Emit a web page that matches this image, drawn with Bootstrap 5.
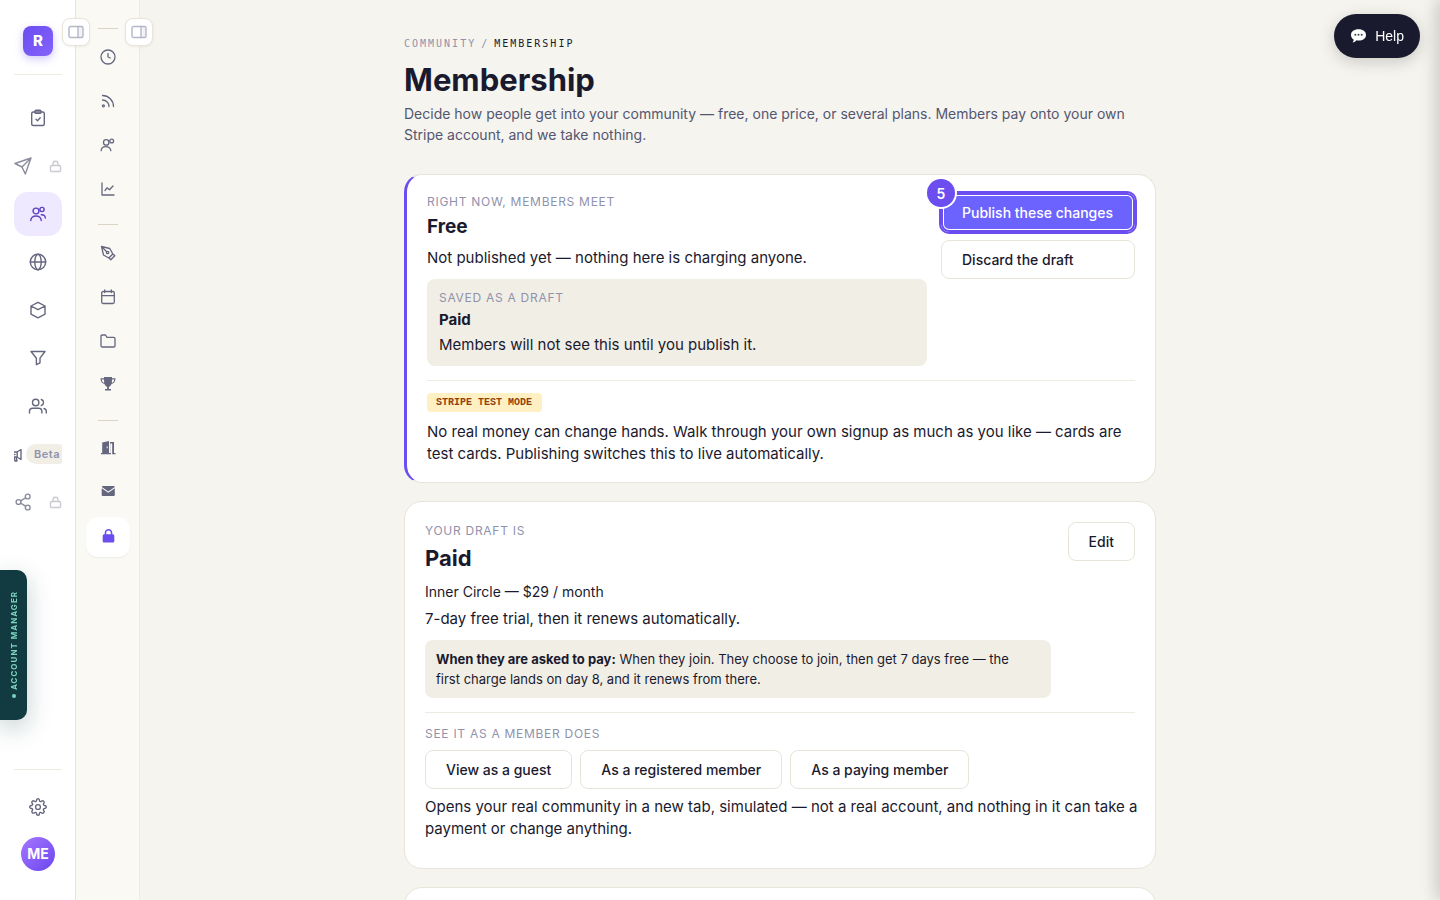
<!DOCTYPE html>
<html lang="en">
<head>
<meta charset="utf-8">
<meta name="viewport" content="width=device-width, initial-scale=1">
<title>Membership</title>
<link rel="stylesheet" href="https://cdn.jsdelivr.net/npm/bootstrap@5.3.0/dist/css/bootstrap.min.css">
<style>
  :root { --ink:#1a1a2e; --muted:#9092ac; --icon:#65677f; --line:#e8e4d9; --brand:#6b4df0; --sand:#f1eee6; }
  body { font-family:Inter,"Liberation Sans",sans-serif; font-size:15px; line-height:22px; color:var(--ink); background:#f5f4ef; }
  svg { fill:none; stroke:currentColor; stroke-width:1.4; stroke-linecap:round; stroke-linejoin:round; flex:none; display:block; }
  .solid { fill:currentColor; stroke:none; }

  /* navigation rails */
  .rail { width:76px; padding:26px 13px 29px 14px; background:#fff; border-right:1px solid var(--line); z-index:3; }
  .subrail { width:64px; padding:28px 9px 0 10px; background:#faf9f4; border-right:1px solid #eceae2; z-index:2; }
  .logo { width:30px; height:30px; border-radius:8px; background:linear-gradient(135deg,#6b4df0,#8463fb); color:#fff; font-weight:800; box-shadow:0 3px 8px #6b4df04d; }
  .rule { height:1px; background:#edeadf; }
  .rule-top { margin:18px 0 21px; }
  .rule-bottom { margin-bottom:15px; }
  .rail-link { height:44px; border-radius:14px; color:var(--icon); overflow:hidden; text-decoration:none; }
  .rail-link.active { background:#eee9ff; color:#5b3fc4; }
  .locked { opacity:.75; }
  .locked .padlock { opacity:.45; }
  .beta { height:20px; padding:0 8px; border-radius:10px; background:var(--sand); color:var(--muted); font-size:11px; font-weight:600; line-height:20px; letter-spacing:.5px; }
  .avatar { width:34px; height:34px; background:linear-gradient(135deg,#a577ff,#6b46ef); color:#fff; font-size:14px; font-weight:700; }
  .sub-link { height:40px; border-radius:12px; color:var(--icon); }
  .sub-link svg:not(.solid) { stroke-width:1.3; }
  .sub-link.active { background:#fff; color:var(--brand); box-shadow:0 1px 2px #0000000d; }
  .sub-rule { width:20px; height:1px; background:#dbd5c1; margin:11px auto 4px; }
  .sub-rule:first-of-type { margin-top:0; }
  .toggle { top:18px; width:28px; height:28px; border:1px solid var(--line); border-radius:8px; background:#fff; color:#b5b6c8; box-shadow:0 1px 3px #0000000f; }
  .rail .toggle { right:-15px; }
  .subrail .toggle { right:-14px; }

  .manager { left:0; bottom:180px; width:27px; height:150px; border-radius:0 10px 10px 0; background:#113b41; color:#7dd3bd; box-shadow:0 8px 24px #113b4140; z-index:5; }
  .manager .vertical { writing-mode:vertical-rl; transform:rotate(180deg); font-size:8px; line-height:12px; font-weight:700; letter-spacing:1px; gap:4px; }
  .dot { width:4px; height:4px; border-radius:50%; background:currentColor; }
  .help { top:14px; right:20px; height:44px; padding:0 16px; border-radius:22px; background:#1a1a2e; color:#fff; font:14px "Liberation Sans",sans-serif; box-shadow:0 4px 16px #0000002e; z-index:5; }
  .drawer { top:0; bottom:0; left:100%; width:320px; box-shadow:-4px 0 16px #0000002e; }

  /* page column */
  .page { overflow-y:auto; scrollbar-width:none; padding:36px 20px 0 0; }
  .column { max-width:752px; }
  .crumbs { font:10px/15px "DejaVu Sans Mono",monospace; letter-spacing:2px; color:#9092ac; gap:5px; }
  .crumbs a { color:inherit; }
  .crumbs .here { color:var(--ink); }
  h1 { font-size:31px; line-height:38px; font-weight:700; margin:10px 0 4px; }
  .intro { font-size:14px; line-height:21px; color:#54566f; margin-bottom:29px; }
  .panel { background:#fff; border:1px solid var(--line); border-radius:18px; padding:20px; margin-bottom:18px; }
  .panel.live { border-left:3px solid var(--brand); padding:18px 20px 17px; }
  .eyebrow { font-size:12px; line-height:18px; letter-spacing:.06em; color:var(--muted); }
  .state { font-size:19px; line-height:26px; font-weight:700; margin:3px 0 7px; }
  .state-lg { font-size:22px; line-height:28px; font-weight:700; margin:4px 0 9px; }
  .plan { font-size:14px; margin-bottom:5px; }
  .summary { margin-right:14px; }
  .saved { background:var(--sand); border-radius:8px; padding:10px 12px; margin-top:10px; }
  .saved-name { font-weight:700; margin:2px 0 3px; }
  .note { background:var(--sand); border-radius:8px; padding:9px 16px 9px 11px; margin-top:10px; font-size:13px; line-height:20px; max-width:626px; }
  .split { border-top:1px solid #eeebe0; margin-top:14px; padding-top:12px; }
  .mode { font:700 10px/19px "Liberation Mono",monospace; background:#fef0c3; color:#92400e; border-radius:4px; padding:0 10px 0 9px; margin-bottom:9px; }
  .previews { margin:7px 0; }
  .act { border:1px solid var(--line); border-radius:8px; background:#fff; color:var(--ink); font-size:14px; line-height:21px; font-weight:500; padding:8px 20px; text-align:left; }
  .actions { min-width:194px; }
  .act-main { background:#6c63ff; border-color:transparent; color:#fff; box-shadow:0 0 0 2px var(--brand); }
  .act-main::after { content:""; position:absolute; inset:-1px; border-radius:8px; box-shadow:inset 0 0 0 2px var(--brand), inset 0 0 0 3px #fff; }
  .step { top:-15px; left:-15px; width:28px; height:28px; border-radius:50%; background:var(--brand); color:#fff; font-size:14px; font-weight:600; box-shadow:0 0 0 2px #fff; z-index:1; }
</style>
</head>
<body class="vh-100 d-flex overflow-hidden">

<nav class="rail position-relative d-flex flex-column flex-shrink-0" aria-label="Main">
  <button class="toggle position-absolute d-flex align-items-center justify-content-center p-0" aria-label="Toggle main menu"><svg width="16" height="14" viewBox="0 0 16 14"><path d="M10.500 2h4v10h-4z" fill="#f0f2f7" stroke="none"/><rect x="1" y="1.500" width="14" height="11" rx="1.500"/><path d="M10 1.500v11"/></svg></button>
  <a href="#" class="logo d-flex align-items-center justify-content-center mx-auto text-decoration-none">R</a>
  <div class="rule rule-top"></div>
  <div class="d-flex flex-column gap-1">
    <a href="#" class="rail-link d-flex align-items-center justify-content-center" aria-label="Tasks"><svg width="18" height="18" viewBox="0 0 18 18"><rect x="2.700" y="3" width="12.600" height="13.500" rx="1.500"/><rect x="6" y="1.200" width="6" height="3.200" rx="1"/><path d="m7 10.300 1.500 1.500 2.700-3"/></svg></a>
    <a href="#" class="rail-link locked d-flex align-items-center justify-content-between" aria-label="Send, locked"><svg width="18" height="18" viewBox="0 0 18 18"><path d="M17 1 1 6.500l7 3.500 3.300 7zM17 1l-9 9"/></svg><svg class="padlock" width="13" height="13" viewBox="0 0 13 13"><rect x="1.500" y="5.500" width="10" height="6" rx="1"/><path d="M4 5.500V3.800a2.500 2.500 0 0 1 5 0v1.700"/></svg></a>
    <a href="#" class="rail-link active d-flex align-items-center justify-content-center" aria-label="Community"><svg width="18" height="18" viewBox="0 0 18 18"><circle cx="7" cy="6" r="2.900"/><circle cx="13" cy="4.500" r="2.100"/><path d="M1.800 15.500c0-6 10.400-6 10.400 0M12.300 9.800c2.500-.2 4 1.200 4 3.200"/></svg></a>
    <a href="#" class="rail-link d-flex align-items-center justify-content-center" aria-label="Website"><svg width="18" height="18" viewBox="0 0 18 18"><circle cx="9" cy="9" r="7.700"/><ellipse cx="9" cy="9" rx="3.200" ry="7.700"/><path d="M1.300 9h15.400"/></svg></a>
    <a href="#" class="rail-link d-flex align-items-center justify-content-center" aria-label="Products"><svg width="18" height="18" viewBox="0 0 18 18"><path d="m9 1.300 7 3.700v8.200l-7 3.600-7-3.600V5zM2 5l7 3.700L16 5"/></svg></a>
    <a href="#" class="rail-link d-flex align-items-center justify-content-center" aria-label="Funnels"><svg width="18" height="18" viewBox="0 0 18 18"><path d="M2 2.500h14l-5 6.700v4.600l-3.600 1.900V9.200z"/></svg></a>
    <a href="#" class="rail-link d-flex align-items-center justify-content-center" aria-label="Contacts"><svg width="20" height="18" viewBox="0 0 20 18"><circle cx="7.700" cy="5.500" r="3.200"/><path d="M1.500 16v-1.500c0-2 1.400-3.200 3.200-3.200h6c1.800 0 3.200 1.200 3.200 3.200V16M18.300 16v-1.500c0-1.500-1-2.700-2.300-3M13.300 2.500c3 1 3 5 0 6"/></svg></a>
    <a href="#" class="rail-link d-flex align-items-center gap-1" aria-label="Campaigns, beta"><svg width="8" height="18" viewBox="0 0 8 18"><path d="M-1 7h4l4-2.500v10L3 12h-4M3.200 7v5M-1 9.500h2M0 12l1 4h2l-.8-3.500"/></svg><span class="beta">Beta</span></a>
    <a href="#" class="rail-link locked d-flex align-items-center justify-content-between" aria-label="Share, locked"><svg width="18" height="18" viewBox="0 0 18 18"><circle cx="13.700" cy="3.500" r="2.400"/><circle cx="4.500" cy="9" r="2.400"/><circle cx="13.700" cy="14.500" r="2.400"/><path d="m6.600 7.800 5-3M6.600 10.200l5 3"/></svg><svg class="padlock" width="13" height="13" viewBox="0 0 13 13"><rect x="1.500" y="5.500" width="10" height="6" rx="1"/><path d="M4 5.500V3.800a2.500 2.500 0 0 1 5 0v1.700"/></svg></a>
  </div>
  <div class="mt-auto">
    <div class="rule rule-bottom"></div>
    <a href="#" class="rail-link d-flex align-items-center justify-content-center" aria-label="Settings"><svg width="18" height="18" viewBox="-9 -9 18 18"><circle r="2.400"/><path d="M-1.500-6.500a1.500 1.800 0 0 1 3 0c0 1 1.200 1.500 2 .8a1.500 1.500 0 0 1 2.200 2.200c-.7.800-.2 2 .8 2a1.800 1.500 0 0 1 0 3c-1 0-1.500 1.200-.8 2a1.500 1.500 0 0 1-2.200 2.200c-.8-.7-2-.2-2 .8a1.500 1.800 0 0 1-3 0c0-1-1.200-1.500-2-.8a1.500 1.500 0 0 1-2.200-2.200c.7-.8.2-2-.8-2a1.800 1.500 0 0 1 0-3c1 0 1.500-1.200.8-2a1.500 1.500 0 0 1 2.200-2.200c.8.7 2 .2 2-.8z"/></svg></a>
    <a href="#" class="avatar rounded-circle d-flex align-items-center justify-content-center mx-auto mt-2 text-decoration-none">ME</a>
  </div>
</nav>

<nav class="subrail position-relative d-flex flex-column gap-1 flex-shrink-0" aria-label="Community">
  <button class="toggle position-absolute d-flex align-items-center justify-content-center p-0" aria-label="Toggle section menu"><svg width="16" height="14" viewBox="0 0 16 14"><path d="M10.500 2h4v10h-4z" fill="#f0f2f7" stroke="none"/><rect x="1" y="1.500" width="14" height="11" rx="1.500"/><path d="M10 1.500v11"/></svg></button>
  <div class="sub-rule"></div>
  <a href="#" class="sub-link d-flex align-items-center justify-content-center" aria-label="Recent"><svg width="16" height="16" viewBox="0 0 16 16"><circle cx="8" cy="8" r="7"/><path d="M8 4.500V8l2.300 1"/></svg></a>
  <a href="#" class="sub-link d-flex align-items-center justify-content-center" aria-label="Feed"><svg width="16" height="16" viewBox="0 0 16 16"><path d="M2.500 2.500c6 0 11 5 11 11M2.500 7c4 0 6.500 3 6.500 6.500"/><circle cx="3.400" cy="12.800" r="1"/></svg></a>
  <a href="#" class="sub-link d-flex align-items-center justify-content-center" aria-label="People"><svg width="16" height="16" viewBox="0 0 16 16"><circle cx="6.200" cy="5.400" r="2.700"/><circle cx="11.700" cy="4" r="1.900"/><path d="M1.200 13.700c0-5.400 9.600-5.400 9.600 0"/></svg></a>
  <a href="#" class="sub-link d-flex align-items-center justify-content-center" aria-label="Analytics"><svg width="16" height="16" viewBox="0 0 16 16"><path d="M2 2v12h12M5 9.500l2-2.700 2.500 2L13 5"/></svg></a>
  <div class="sub-rule"></div>
  <a href="#" class="sub-link d-flex align-items-center justify-content-center" aria-label="Design"><svg width="16" height="16" viewBox="0 0 16 16"><path d="m1.500 1.500 2 8.500 5.300 3 4-4-3-5.500zM1.500 1.500l5.200 5.200M9.500 13.500l1.300 1.300 4-4-1.300-1.300"/><circle cx="7.600" cy="7.500" r="1.200"/></svg></a>
  <a href="#" class="sub-link d-flex align-items-center justify-content-center" aria-label="Calendar"><svg width="16" height="16" viewBox="0 0 16 16"><rect x="1.700" y="2.500" width="12.600" height="12" rx="1.500"/><path d="M1.700 6.700h12.600M4.700 1v2.500M11.300 1v2.500"/></svg></a>
  <a href="#" class="sub-link d-flex align-items-center justify-content-center" aria-label="Files"><svg width="16" height="16" viewBox="0 0 16 16"><path d="M1 3.200c0-.8.500-1.200 1.200-1.200h3.300L7 4.300h6.800c.8 0 1.200.5 1.200 1.200v7.200c0 .8-.5 1.300-1.200 1.300H2.200c-.7 0-1.200-.5-1.200-1.300z"/></svg></a>
  <a href="#" class="sub-link d-flex align-items-center justify-content-center" aria-label="Rewards"><svg class="solid" width="16" height="16" viewBox="0 0 16 16"><path d="M4 0h8v1.300h3.500c0 3.500-1.500 5.200-4 5.700C11 8.500 10 9.500 8.900 9.800V12H11v1.500H5V12h2.100V9.800C6 9.500 5 8.500 4.500 7 2 6.500.5 4.800.5 1.300H4zM1.700 2.400c.2 1.800 1 3 2.500 3.400L4 2.400zm12.600 0H12l-.2 3.400c1.500-.4 2.300-1.600 2.500-3.400z"/></svg></a>
  <div class="sub-rule"></div>
  <a href="#" class="sub-link d-flex align-items-center justify-content-center" aria-label="Access"><svg class="solid" width="16" height="16" viewBox="0 0 16 16"><path fill-rule="evenodd" d="M2.200 1.500 9 0v12h1.800V2.500H10V1h4v11h1.500v1.300h-3.300V2.500H11v10.800H1V12h1.200zM6.700 5.500v1.800h1V5.500z"/></svg></a>
  <a href="#" class="sub-link d-flex align-items-center justify-content-center" aria-label="Mail"><svg class="solid" width="16" height="16" viewBox="0 0 16 16"><path d="M3 1h10.500c.8 0 1.200.4 1.300 1L8.300 6.500 1.800 2c.1-.6.500-1 1.200-1zM1.700 3.200 8.300 7.800l6.500-4.600v6.500c0 .8-.5 1.300-1.300 1.300H3c-.8 0-1.300-.5-1.300-1.300z"/></svg></a>
  <a href="#" class="sub-link active d-flex align-items-center justify-content-center" aria-label="Membership"><svg class="solid" width="16" height="16" viewBox="0 0 16 16"><path fill-rule="evenodd" d="M4.700 5.300V4c0-5.300 7.600-5.300 7.600 0v1.300c1.300 0 2 .6 2 1.600v5c0 1-.6 1.600-1.600 1.600H4.300c-1 0-1.600-.6-1.600-1.600v-5c0-1 .7-1.600 2-1.600zm1.500 0h4.600V4c0-3.300-4.600-3.300-4.600 0z"/></svg></a>
</nav>

<main class="page flex-grow-1">
  <div class="column mx-auto">
    <nav class="crumbs d-flex" aria-label="Breadcrumb"><a href="#" class="text-decoration-none">COMMUNITY</a><span>/</span><span class="here" aria-current="page">MEMBERSHIP</span></nav>
    <h1>Membership</h1>
    <p class="intro">Decide how people get into your community — free, one price, or several plans. Members pay onto your own Stripe account, and we take nothing.</p>

    <section class="panel live">
      <div class="d-flex align-items-start">
        <div class="summary flex-grow-1">
          <div class="eyebrow">RIGHT NOW, MEMBERS MEET</div>
          <h2 class="state">Free</h2>
          <p class="mb-0">Not published yet — nothing here is charging anyone.</p>
          <div class="saved">
            <div class="eyebrow">SAVED AS A DRAFT</div>
            <div class="saved-name">Paid</div>
            <p class="mb-0">Members will not see this until you publish it.</p>
          </div>
        </div>
        <div class="actions d-flex flex-column gap-2 flex-shrink-0">
          <button class="act act-main position-relative">Publish these changes<span class="step position-absolute d-flex align-items-center justify-content-center">5</span></button>
          <button class="act">Discard the draft</button>
        </div>
      </div>
      <div class="split">
        <div class="d-flex"><span class="mode">STRIPE TEST MODE</span></div>
        <p class="mb-0">No real money can change hands. Walk through your own signup as much as you like — cards are test cards. Publishing switches this to live automatically.</p>
      </div>
    </section>

    <section class="panel">
      <div class="d-flex align-items-start">
        <div class="flex-grow-1">
          <div class="eyebrow">YOUR DRAFT IS</div>
          <h2 class="state-lg">Paid</h2>
          <div class="plan">Inner Circle — $29 / month</div>
          <p class="mb-0">7-day free trial, then it renews automatically.</p>
          <div class="note"><strong>When they are asked to pay:</strong> When they join. They choose to join, then get 7 days free — the first charge lands on day 8, and it renews from there.</div>
        </div>
        <button class="act flex-shrink-0">Edit</button>
      </div>
      <div class="split">
        <div class="eyebrow">SEE IT AS A MEMBER DOES</div>
        <div class="previews d-flex flex-wrap gap-2">
          <button class="act">View as a guest</button>
          <button class="act">As a registered member</button>
          <button class="act">As a paying member</button>
        </div>
        <p class="mb-1 pb-1"><span class="text-nowrap">Opens your real community in a new tab, simulated — not a real account, and nothing in it can take a</span> payment or change anything.</p>
      </div>
    </section>

    <section class="panel"></section>
  </div>
</main>

<button class="manager position-fixed border-0 p-0 d-flex align-items-center justify-content-center"><span class="vertical d-flex align-items-center"><span class="dot"></span>ACCOUNT MANAGER</span></button>
<button class="help position-fixed border-0 d-flex align-items-center gap-2"><svg width="17" height="16" viewBox="0 0 17 16"><path d="M8.500 1.300c4.500 0 7.500 2.300 7.500 5.600s-3 5.600-7.500 5.600c-.7 0-1.400 0-2-.2-.8 1.300-2.200 2-4 2.200.9-.8 1.200-1.800 1.100-2.900C1.900 10.300 1 8.800 1 6.900c0-3.300 3-5.600 7.500-5.600z" fill="#fff" stroke="none"/><g fill="#37474f" stroke="none"><circle cx="5.300" cy="6.700" r="1"/><circle cx="8.500" cy="6.700" r="1"/><circle cx="11.700" cy="6.700" r="1"/></g></svg>Help</button>
<div class="drawer position-fixed"></div>

<script src="https://cdn.jsdelivr.net/npm/bootstrap@5.3.0/dist/js/bootstrap.bundle.min.js"></script>
</body>
</html>
